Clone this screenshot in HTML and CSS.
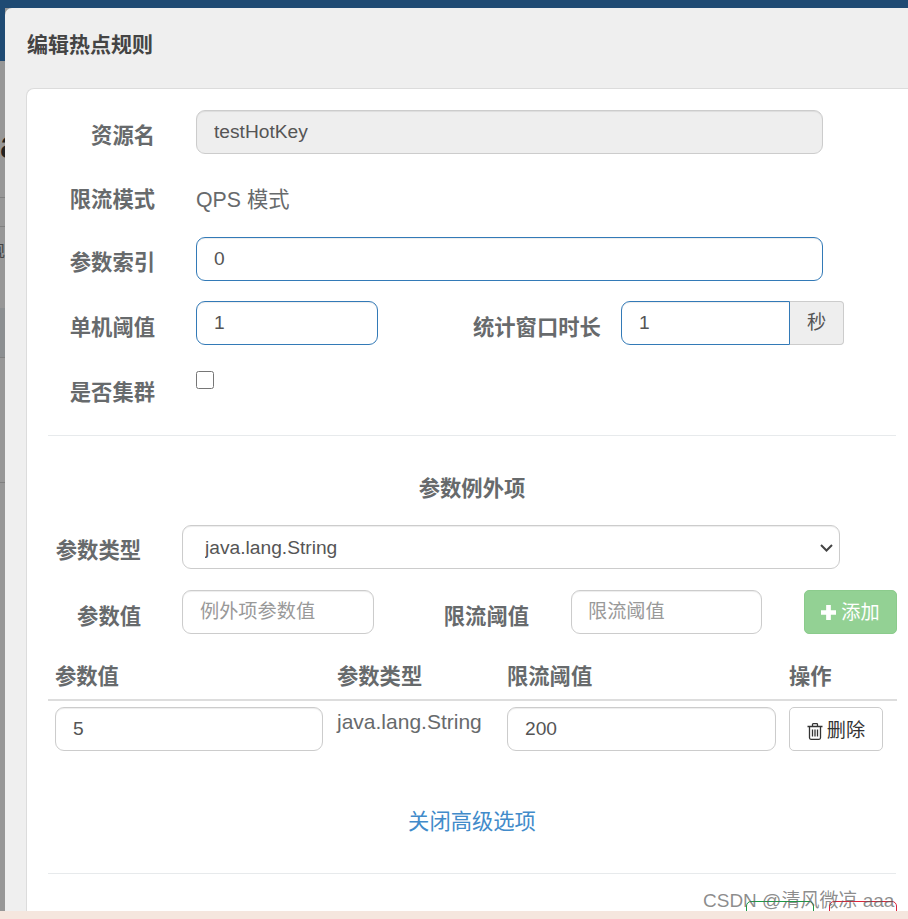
FILE: index.html
```html
<!DOCTYPE html>
<html lang="zh-CN">
<head>
  <meta charset="UTF-8">
  <title>编辑热点规则</title>
  <link rel="stylesheet" href="styles.css">
</head>
<body>
  <div class="topbar"></div>

  <div class="main">
    <!-- page behind the dialog, only a sliver shows -->
    <div class="backdrop">
      <div class="back-nav"></div>
      <div class="back-title">a</div>
      <div class="back-row back-row-sm"></div>
      <div class="back-row back-row-text">规</div>
      <div class="back-row back-row-dark"></div>
      <div class="back-row back-row-lg"></div>
    </div>

    <div class="modal">
      <div class="modal-header">编辑热点规则</div>

      <div class="panel">
        <div class="row">
          <label class="label">资源名</label>
          <input class="input input-full input-disabled" type="text" value="testHotKey" readonly>
        </div>
        <div class="row row-text">
          <label class="label">限流模式</label>
          <p class="static">QPS 模式</p>
        </div>
        <div class="row">
          <label class="label">参数索引</label>
          <input class="input input-full input-focus" type="text" value="0">
        </div>
        <div class="row row-low">
          <label class="label">单机阈值</label>
          <input class="input input-short input-focus" type="text" value="1">
          <label class="label label-window">统计窗口时长</label>
          <div class="input-group">
            <input class="input input-window input-focus" type="text" value="1">
            <span class="addon">秒</span>
          </div>
        </div>
        <div class="row row-check">
          <label class="label">是否集群</label>
          <input class="check" type="checkbox">
        </div>

        <hr class="line line-first">

        <h4 class="section-title">参数例外项</h4>

        <div class="row row-param">
          <label class="label label-param">参数类型</label>
          <div class="select-wrap">
            <select class="input select">
              <option>java.lang.String</option>
            </select>
            <svg class="select-arrow" viewBox="0 0 13 8"><path d="M1 1l5.500 5.500L12 1"/></svg>
          </div>
        </div>
        <div class="row row-param row-value">
          <label class="label label-param">参数值</label>
          <input class="input input-param" type="text" placeholder="例外项参数值">
          <label class="label label-limit">限流阈值</label>
          <input class="input input-limit" type="text" placeholder="限流阈值">
          <button class="btn-add" type="button">
            <svg class="icon-plus" viewBox="0 0 16 16"><path d="M5.500 0h5v5.500H16v5h-5.500V16h-5v-5.500H0v-5h5.500z"/></svg>添加
          </button>
        </div>

        <table class="param-table">
          <thead>
            <tr>
              <th class="col-value">参数值</th>
              <th class="col-type">参数类型</th>
              <th class="col-limit">限流阈值</th>
              <th class="col-op">操作</th>
            </tr>
          </thead>
          <tbody>
            <tr>
              <td><input class="input input-cell" type="text" value="5"></td>
              <td class="cell-text">java.lang.String</td>
              <td><input class="input input-cell input-cell-wide" type="text" value="200"></td>
              <td>
                <button class="btn-del" type="button">
                  <svg class="icon-trash" viewBox="0 0 16 17"><path d="M5.500 3V1.500q0-.8.8-.8h3.400q.8 0 .8.8V3M.5 3.500h15M2.500 3.500v11.300q0 1.500 1.500 1.500h8q1.500 0 1.500-1.500V3.500M5.500 6.500v7M8 6.500v7M10.500 6.500v7"/></svg>删除
                </button>
              </td>
            </tr>
          </tbody>
        </table>

        <div class="toggle"><a class="toggle-link" href="#">关闭高级选项</a></div>

        <hr class="line">

        <div class="footer">
          <button class="btn-save" type="button">保存</button>
          <button class="btn-cancel" type="button">取消</button>
        </div>
      </div>
    </div>
  </div>

  <div class="bottom-strip"></div>

  <div class="watermark">CSDN @清风微凉 aaa</div>
</body>
</html>
```

FILE: styles.css
```css
* {
  box-sizing: border-box;
}
html, body {
  height: 100%;
}
body {
  margin: 0;
  display: flex;
  flex-direction: column;
  overflow: hidden;
  font-family: "Liberation Sans", "Noto Sans CJK SC", sans-serif;
  color: #676a6c;
  background: #999;
}
.topbar {
  height: 8px;
  flex: none;
  background: #1f4a73;
}
.main {
  flex: 1;
  min-height: 0;
  display: flex;
}
.bottom-strip {
  height: 8px;
  flex: none;
  background: #f5e6de;
}

.backdrop {
  width: 5px;
  flex: none;
  overflow: hidden;
  background: #979797;
}
.back-nav {
  height: 53px;
  background: #1f4a73;
}
.back-title {
  height: 136px;
  padding-top: 58px;
  font-size: 40px;
  font-weight: bold;
  line-height: 50px;
  color: #222;
}
.back-row {
  border-top: 1px solid #808080;
}
.back-row-sm {
  height: 29px;
}
.back-row-text {
  height: 82px;
  font-size: 16px;
  line-height: 50px;
  margin-left: -11px;
  color: #444;
}
.back-row-dark {
  height: 49px;
  background: #8c8f91;
  border-top: 0;
}
.back-row-lg {
  height: 126px;
  border-bottom: 1px solid #808080;
}

.modal {
  flex: 1;
  min-width: 0;
  display: flex;
  flex-direction: column;
  padding-left: 21px;
  background: #efefef;
  border-top-left-radius: 7px;
  overflow: hidden;
}
.modal-header {
  height: 80px;
  flex: none;
  padding-top: 25px;
  padding-left: 1px;
  font-size: 21px;
  font-weight: bold;
  line-height: 24px;
  color: #444;
}
.panel {
  flex: 1;
  min-height: 0;
  padding: 21px 12px 0 21px;
  background: #fff;
  border: 1px solid #dcdcdc;
  border-right: 0;
  border-bottom: 0;
  border-top-left-radius: 8px;
  overflow: hidden;
}

.row {
  display: flex;
  align-items: flex-start;
  margin-bottom: 20px;
}
.row-text {
  height: 43px;
}
.row-check {
  height: 50px;
}
.row-param {
  margin-bottom: 21px;
}
.label {
  width: 107px;
  flex: none;
  padding-top: 16px;
  margin-right: 41px;
  font-size: 21.300px;
  font-weight: bold;
  line-height: 21px;
  text-align: right;
  white-space: nowrap;
}
.row-low .label {
  padding-top: 17px;
}
.row-check .label {
  padding-top: 18px;
}
.row-value .label {
  padding-top: 17px;
}
.label-window {
  width: 127px;
  margin-left: 95px;
  margin-right: 21px;
}
.label-param {
  width: 93px;
}
.label-limit {
  width: 90px;
  margin-left: 65px;
  margin-right: 42px;
}
.static {
  margin: 0;
  padding-top: 16px;
  font-size: 21.300px;
  line-height: 21px;
}

.input {
  height: 44px;
  padding: 0 17px;
  font-family: inherit;
  font-size: 19.200px;
  color: #555;
  background: #fff;
  border: 1px solid #ccc;
  border-radius: 9px;
  box-shadow: inset 0 1px 1px rgba(0, 0, 0, .075);
  outline: none;
}
.input::placeholder {
  color: #999;
}
.input-full {
  width: 627px;
}
.input-short {
  width: 182px;
}
.input-disabled {
  background: #eee;
}
.input-focus {
  border-color: #337ab7;
}
.input-group {
  display: flex;
}
.input-window {
  width: 169px;
  border-top-right-radius: 0;
  border-bottom-right-radius: 0;
}
.addon {
  width: 54px;
  height: 44px;
  font-size: 19.200px;
  line-height: 42px;
  text-align: center;
  color: #555;
  background: #eee;
  border: 1px solid #ccc;
  border-left: 0;
  border-radius: 0 4px 4px 0;
}
.check {
  width: 18px;
  height: 18px;
  margin: 6px 0 0;
}

.line {
  margin: 0;
  border: 0;
  border-top: 1px solid #e7eaec;
}
.section-title {
  margin: 41px 0 24px;
  font-size: 21.300px;
  font-weight: bold;
  line-height: 24px;
  text-align: center;
}

.select-wrap {
  position: relative;
}
.select {
  display: block;
  width: 658px;
  padding-left: 22px;
  appearance: none;
}
.select-arrow {
  position: absolute;
  top: 19px;
  right: 7px;
  width: 13px;
  height: 8px;
  fill: none;
  stroke: #444;
  stroke-width: 2;
}
.input-param {
  width: 192px;
}
.input-limit {
  width: 191px;
  padding-left: 16px;
}
.btn-add {
  width: 93px;
  height: 44px;
  flex: none;
  margin-left: 42px;
  padding: 0 0 3px;
  font-family: inherit;
  font-size: 19.200px;
  color: #fff;
  background: #93d194;
  border: 1px solid #8bcb8c;
  border-radius: 5px;
}
.icon-plus {
  width: 15px;
  height: 15px;
  margin-right: 5px;
  vertical-align: -1px;
  fill: #fff;
}

.param-table {
  width: 849px;
  table-layout: fixed;
  border-collapse: collapse;
  margin-top: -1px;
}
.param-table th {
  height: 46px;
  padding: 0 7px;
  font-size: 21.300px;
  font-weight: bold;
  line-height: 24px;
  text-align: left;
  border-bottom: 2px solid #ddd;
}
.param-table td {
  padding: 6px 7px 0;
  vertical-align: top;
}
.col-value {
  width: 282px;
}
.col-type {
  width: 170px;
}
.col-limit {
  width: 282px;
}
.col-op {
  width: 115px;
}
.input-cell {
  width: 268px;
}
.input-cell-wide {
  width: 269px;
}
.cell-text {
  font-size: 21px;
  line-height: 30px;
}
.btn-del {
  width: 94px;
  height: 44px;
  padding: 0;
  font-family: inherit;
  font-size: 19.200px;
  color: #333;
  background: #fff;
  border: 1px solid #ccc;
  border-radius: 5px;
}
.icon-trash {
  width: 16px;
  height: 17px;
  margin-right: 4px;
  vertical-align: -3px;
  fill: none;
  stroke: #333;
  stroke-width: 1.300;
}

.toggle {
  margin-top: 59px;
  height: 63px;
  text-align: center;
}
.toggle-link {
  font-size: 21.300px;
  line-height: 24px;
  color: #428bca;
  text-decoration: none;
}

.footer {
  display: flex;
  justify-content: flex-end;
  gap: 15px;
  padding-top: 27px;
  margin-right: -1px;
}
.btn-save,
.btn-cancel {
  width: 68px;
  height: 44px;
  padding: 0;
  font-family: inherit;
  font-size: 19.200px;
  background: #fff;
  border-radius: 5px;
}
.btn-save {
  color: #1c9a45;
  border: 1px solid #1c9a45;
}
.btn-cancel {
  color: #d9263c;
  border: 1px solid #d9263c;
}

.watermark {
  position: absolute;
  left: 703px;
  top: 889px;
  font-size: 19px;
  line-height: 24px;
  white-space: nowrap;
  color: rgba(90, 90, 90, .7);
}
```
